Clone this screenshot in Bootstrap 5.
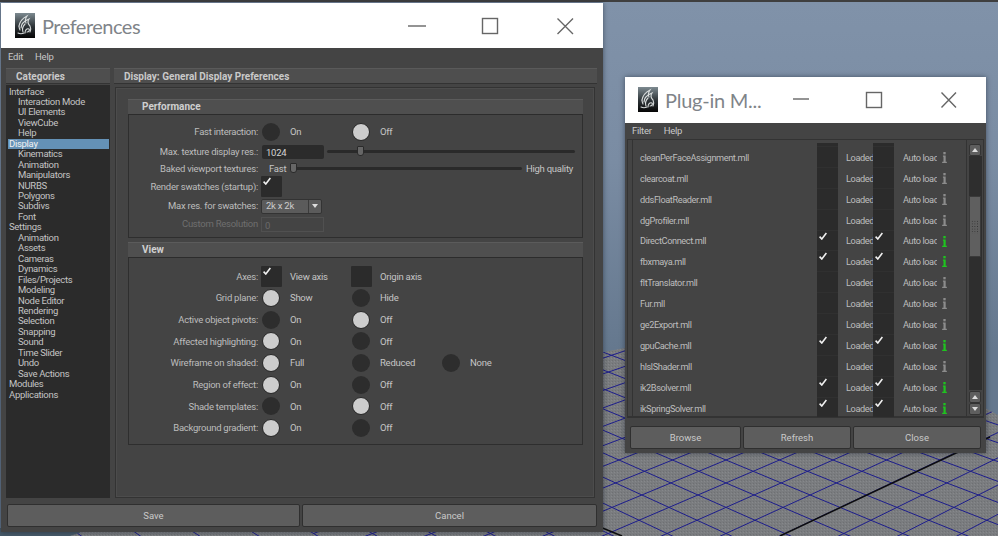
<!DOCTYPE html>
<html lang="en">
<head>
<meta charset="UTF-8">
<meta name="viewport" content="width=device-width, initial-scale=1.0">
<link href="https://cdn.jsdelivr.net/npm/bootstrap@5.3.0/dist/css/bootstrap.min.css" rel="stylesheet">
<title>Preferences</title>
<style>
    html, body { height: 100%; }
    body { width: 998px; height: 536px; overflow: hidden; background: #3c3c3c; font-family: Roboto, "Liberation Sans", sans-serif; font-size: 9.5px; letter-spacing: -.25px; color: #c4c4c4; line-height: 1; }
    .desk { position: absolute; inset: 0; background: linear-gradient(180deg, #8092a9 0%, #7a8ca3 30%, #65788e 65%); border-top: 2px solid #3f3f3f; }
    .desk svg { position: absolute; left: 0; top: -2px; }

    .app-win { position: absolute; background: #444; box-shadow: 0 0 5px rgba(20, 30, 40, .55); }
    .win-pref { left: 1px; top: 3px; width: 602px; height: 529px; }
    .win-plug { left: 625px; top: 77px; width: 361px; height: 376px; }
    .win-title { height: 45px; background: #fff; flex: none; }
    .win-plug .win-title { height: 45.5px; }
    .win-name { font-family: Lato, "Open Sans", sans-serif; font-size: 20px; letter-spacing: -.5px; color: #7f8489; }
    .win-plug .win-name { letter-spacing: -.25px; }
    .win-icons { flex: none; }
    .win-menu { height: 18px; flex: none; color: #c8c8c8; }
    .win-plug .win-menu { height: 16.5px; }

    .pane-head { height: 16px; background: #4e4e4e; border-top: 1px solid #5a5a5a; border-bottom: 1px solid #333; font-size: 10px; letter-spacing: 0; font-weight: 700; color: #c9c9c9; flex: none; padding-top: 1px; }
    .cat-col { width: 104px; flex: none; }
    .cat-list { flex: 1; margin-top: 1px; background: #2b2b2b; padding: 1.5px 1px 0 2px; border: 0; border-radius: 0; letter-spacing: -.3px; }
    .cat-item { height: 10.46px; line-height: 10.46px; padding: 0 0 0 1px; background: none; border: 0; color: #c4c4c4; border-radius: 0 !important; white-space: nowrap; }
    .cat-sub { padding-left: 10px; }
    .cat-on { background: #6491b6; color: #f2f2f2; }
    .main-col { width: 483px; flex: none; }
    .main-frame { flex: 1; margin: 3px 2px 0 1px; border: 1px solid #333; box-shadow: inset 0 0 0 1px #4c4c4c; padding: 11px 11px 0 12px; }

    .sec-head { height: 16px; background: #4f4f4f; border-top: 1px solid #5b5b5b; border-bottom: 1px solid #2c2c2c; font-size: 10px; letter-spacing: 0; font-weight: 700; padding-left: 14px; color: #cfcfcf; }
    .sec-body { border: 1px solid #2e2e2e; border-top: 0; }
    .sec-perf { height: 123px; padding-top: 7px; margin-bottom: 4px; }
    .sec-view { height: 187px; padding-top: 7.5px; }
    .opt-row { display: grid; grid-template-columns: 129px 90px 90px 90px; column-gap: 0; align-items: center; }
    .sec-view .opt-row { height: 21.7px; }
    .h-15 { height: 15px; }
    .h-16 { height: 16px; }
    .h-19 { height: 19px; }
    .h-20 { height: 20px; }
    .opt-label { text-align: right; color: #bdbdbd; white-space: nowrap; }
    .opt-dim { color: #6f6f6f; }
    .opt-cell { margin-left: 4px; display: flex; align-items: center; white-space: nowrap; }
    .opt-wide { grid-column: 2 / 5; width: 313px; }
    .mark-box { width: 28px; flex: none; }
    .dot-off, .dot-on { display: block; width: 18px; height: 18px; border-radius: 50%; background: #2d2d2d; }
    .dot-on { background: #cdcdcd; border: 1px solid #262626; }
    .chk-box { display: block; position: relative; width: 21px; height: 21px; margin-left: -1px; background: #2b2b2b; border-radius: 1px; }
    .chk-box svg, .plug-chk svg { position: absolute; left: 2px; top: 1px; }

    .num-field { display: block; width: 62px; height: 14px; background: #2b2b2b; border-radius: 2px; padding: 3px 0 0 4px; color: #d4d4d4; flex: none; }
    .slider-rail { position: relative; height: 3px; background: #2a2a2a; border-radius: 2px; flex: 1; }
    .slider-knob { position: absolute; top: -4px; width: 7px; height: 10px; background: #666; border: 1px solid #2a2a2a; border-radius: 1px 1px 3px 3px; }
    .combo-box { width: 61px; height: 15px; margin-left: -1px; background: #5b5b5b; border: 1px solid #333; border-radius: 2px; color: #ccc; }
    .combo-arrow { width: 13px; border-left: 1px solid #3b3b3b; }
    .combo-arrow i { display: block; border: 3px solid transparent; border-top: 4px solid #ddd; border-bottom: 0; }
    .off-field { width: 63px; height: 15px; margin-left: -1px; border: 1px solid #505050; padding: 3px 0 0 3px; color: #6a6a6a; }

    .act-btn { height: 23px; padding: 1px 0 0; background: #5d5d5d; border: 1px solid #2f2f2f; border-radius: 2px; color: #c9c9c9; font-size: 9.5px; line-height: 1; }
    .act-btn:hover { background: #666; color: #ddd; border-color: #2f2f2f; }
    .win-plug .act-btn { padding: 0; }

    .plug-frame { height: 279px; margin: 0 2px; border: 1px solid #333; border-bottom-width: 2px; flex: none; }
    .plug-strip { width: 5px; border-right: 1px solid #333; flex: none; }
    .plug-rows { width: 333px; height: 274px; margin-top: 3px; overflow: hidden; flex: none; letter-spacing: -.4px; font-size: 9.2px; }
    .plug-row { height: 20.9px; display: flex; align-items: center; color: #bdbdbd; }
    .plug-row:first-child { margin-top: -16.9px; }
    .plug-name { width: 184px; padding-left: 7px; flex: none; white-space: nowrap; }
    .plug-chk { position: relative; width: 21px; height: 100%; background: #2b2b2b; border-bottom: 1px solid #303030; flex: none; }
    .plug-chk svg { left: 2px; top: 1px; }
    .plug-txt { overflow: hidden; white-space: nowrap; flex: none; }
    .txt-a { width: 35px; padding-left: 8px; }
    .txt-b { width: 43px; padding-left: 9px; }
    .plug-info { margin-left: 5px; }
    .plug-bar { width: 18px; border-left: 1px solid #333; padding: 4px 2px 1px 2px; flex: none; }
    .bar-btn { width: 12px; height: 12px; background: #5e5e5e; border: 1px solid #333; border-radius: 2px; flex: none; }
    .bar-btn i { display: block; border: 3px solid transparent; }
    .bar-up i { border-bottom: 4px solid #ddd; border-top: 0; }
    .bar-down i { border-top: 4px solid #ddd; border-bottom: 0; }
    .bar-track { height: 236px; margin: 0 0 1px; background: #2e2e2e; padding-top: 40px; }
    .bar-thumb { width: 12px; height: 61px; background: #5f5f5f; border: 1px solid #3a3a3a; }
    .bar-grip { width: 8px; height: 14px; background-image: radial-gradient(#333 .7px, transparent .8px); background-size: 2.6px 2.6px; }
</style>
</head>
<body>

<div class="desk">
    <svg width="998" height="536" xmlns="http://www.w3.org/2000/svg">
        <defs>
            <pattern id="dither" width="3" height="3" patternUnits="userSpaceOnUse">
                <rect width="3" height="3" fill="#7a7c7f"/>
                <rect width="1" height="1" fill="#6e7073"/>
                <rect x="2" y="1" width="1" height="1" fill="#86888b"/>
            </pattern>
            <clipPath id="floorClip"><polygon points="70,536 604,352 640,345 985,408 998,415 998,536"/></clipPath>
        </defs>
        <rect x="0" y="528" width="80" height="8" fill="#475a69"/>
        <polygon points="70,536 604,352 640,345 985,408 998,415 998,536" fill="url(#dither)"/>
        <g id="floorLines" clip-path="url(#floorClip)" stroke="#1d1d8c" stroke-width="1" fill="none"></g>
        <g clip-path="url(#floorClip)" stroke="#0d0d0d" stroke-width="1.5">
            <line x1="780" y1="536" x2="990" y2="437"/>
            <line x1="600" y1="527" x2="622" y2="536"/>
        </g>
    </svg>
</div>

<svg width="0" height="0" class="position-absolute">
    <defs>
        <linearGradient id="logoBg" x1="0" y1="0" x2="0" y2="1">
            <stop offset="0" stop-color="#7d8a90"/>
            <stop offset=".55" stop-color="#2c3236"/>
            <stop offset="1" stop-color="#050505"/>
        </linearGradient>
        <symbol id="mayaLogo" viewBox="0 0 20 25">
            <rect width="20" height="25" fill="url(#logoBg)"/>
            <g fill="none" stroke="#d8dcdc" stroke-width="1.1" stroke-linecap="round">
                <path d="M4 13C5 8 8 5 12 3C10 6 10 8 11 10"/>
                <path d="M6 15C6 11 9 8 14 6C12 9 13 11 15 13C16 15 16 17 15 19"/>
                <path d="M5 17C4 15 4 14 4 13M8 19C7 16 8 13 10 11"/>
                <path d="M10 20C10 17 12 15 14 16C15 17 14 19 12 19"/>
                <path d="M3 20C5 21 7 21 9 20"/>
            </g>
        </symbol>
        <symbol id="tick" viewBox="0 0 8 8">
            <path d="M.6 4.6L2.8 7L7.4 1" fill="none" stroke="#f0f0f0" stroke-width="1.6"/>
        </symbol>
        <symbol id="infoMark" viewBox="0 0 6 14">
            <rect x="1.5" y="0" width="3" height="3"/>
            <path d="M1 4.5H4.5V12.5H6V14H0V12.5H1.7V6H1Z"/>
        </symbol>
    </defs>
</svg>

<!-- preferences window -->
<div class="app-win win-pref d-flex flex-column">
    <div class="win-title d-flex align-items-center position-relative">
        <svg width="20" height="25" style="margin-left:14px"><use href="#mayaLogo"/></svg>
        <span class="win-name" style="margin-left:7px">Preferences</span>
        <svg class="win-icons position-absolute top-0" style="left:400px" width="180" height="45" fill="none" stroke="#666" stroke-width="1.4">
            <line x1="7" y1="23" x2="25" y2="23"/>
            <rect x="81.5" y="15.5" width="15" height="15"/>
            <path d="M156.5 15.5L172 31M172 15.5L156.5 31"/>
        </svg>
    </div>
    <div class="win-menu d-flex align-items-center ps-2" style="gap:12px">
        <span style="margin-left:-1px">Edit</span><span>Help</span>
    </div>
    <div class="d-flex flex-grow-1 gap-1" style="padding:2px 6px 0 5px">
        <div class="cat-col d-flex flex-column">
            <div class="pane-head d-flex align-items-center" style="padding-left:10px">Categories</div>
            <div class="cat-list list-group">
                <div class="cat-item list-group-item">Interface</div>
                <div class="cat-item cat-sub list-group-item">Interaction Mode</div>
                <div class="cat-item cat-sub list-group-item">UI Elements</div>
                <div class="cat-item cat-sub list-group-item">ViewCube</div>
                <div class="cat-item cat-sub list-group-item">Help</div>
                <div class="cat-item cat-on list-group-item">Display</div>
                <div class="cat-item cat-sub list-group-item">Kinematics</div>
                <div class="cat-item cat-sub list-group-item">Animation</div>
                <div class="cat-item cat-sub list-group-item">Manipulators</div>
                <div class="cat-item cat-sub list-group-item">NURBS</div>
                <div class="cat-item cat-sub list-group-item">Polygons</div>
                <div class="cat-item cat-sub list-group-item">Subdivs</div>
                <div class="cat-item cat-sub list-group-item">Font</div>
                <div class="cat-item list-group-item">Settings</div>
                <div class="cat-item cat-sub list-group-item">Animation</div>
                <div class="cat-item cat-sub list-group-item">Assets</div>
                <div class="cat-item cat-sub list-group-item">Cameras</div>
                <div class="cat-item cat-sub list-group-item">Dynamics</div>
                <div class="cat-item cat-sub list-group-item">Files/Projects</div>
                <div class="cat-item cat-sub list-group-item">Modeling</div>
                <div class="cat-item cat-sub list-group-item">Node Editor</div>
                <div class="cat-item cat-sub list-group-item">Rendering</div>
                <div class="cat-item cat-sub list-group-item">Selection</div>
                <div class="cat-item cat-sub list-group-item">Snapping</div>
                <div class="cat-item cat-sub list-group-item">Sound</div>
                <div class="cat-item cat-sub list-group-item">Time Slider</div>
                <div class="cat-item cat-sub list-group-item">Undo</div>
                <div class="cat-item cat-sub list-group-item">Save Actions</div>
                <div class="cat-item list-group-item">Modules</div>
                <div class="cat-item list-group-item">Applications</div>
            </div>
        </div>
        <div class="main-col d-flex flex-column">
            <div class="pane-head d-flex align-items-center" style="padding-left:10px">Display: General Display Preferences</div>
            <div class="main-frame">
                <div class="sec-head d-flex align-items-center">Performance</div>
                <div class="sec-body sec-perf">
                    <div class="opt-row h-20">
                        <span class="opt-label">Fast interaction:</span>
                        <span class="opt-cell"><span class="mark-box"><i class="dot-off"></i></span>On</span>
                        <span class="opt-cell"><span class="mark-box"><i class="dot-on"></i></span>Off</span>
                    </div>
                    <div class="opt-row h-19">
                        <span class="opt-label">Max. texture display res.:</span>
                        <span class="opt-cell opt-wide" style="gap:3px">
                            <span class="num-field">1024</span>
                            <span class="slider-rail"><i class="slider-knob" style="left:30px"></i></span>
                        </span>
                    </div>
                    <div class="opt-row h-15">
                        <span class="opt-label">Baked viewport textures:</span>
                        <span class="opt-cell opt-wide" style="padding:0 2px 0 7px">
                            <span>Fast</span>
                            <span class="slider-rail mx-1"><i class="slider-knob" style="left:0"></i></span>
                            <span>High quality</span>
                        </span>
                    </div>
                    <div class="opt-row h-20">
                        <span class="opt-label">Render swatches (startup):</span>
                        <span class="opt-cell"><span class="chk-box"><svg width="8" height="8"><use href="#tick"/></svg></span></span>
                    </div>
                    <div class="opt-row h-20">
                        <span class="opt-label">Max res. for swatches:</span>
                        <span class="opt-cell">
                            <span class="combo-box d-flex align-items-stretch">
                                <span class="flex-grow-1 d-flex align-items-center ps-1">2k x 2k</span>
                                <span class="combo-arrow d-flex align-items-center justify-content-center"><i></i></span>
                            </span>
                        </span>
                    </div>
                    <div class="opt-row h-16">
                        <span class="opt-label opt-dim">Custom Resolution</span>
                        <span class="opt-cell"><span class="off-field">0</span></span>
                    </div>
                </div>
                <div class="sec-head d-flex align-items-center">View</div>
                <div class="sec-body sec-view">
                    <div class="opt-row">
                        <span class="opt-label">Axes:</span>
                        <span class="opt-cell"><span class="mark-box"><span class="chk-box"><svg width="8" height="8"><use href="#tick"/></svg></span></span>View axis</span>
                        <span class="opt-cell"><span class="mark-box"><span class="chk-box"></span></span>Origin axis</span>
                    </div>
                    <div class="opt-row">
                        <span class="opt-label">Grid plane:</span>
                        <span class="opt-cell"><span class="mark-box"><i class="dot-on"></i></span>Show</span>
                        <span class="opt-cell"><span class="mark-box"><i class="dot-off"></i></span>Hide</span>
                    </div>
                    <div class="opt-row">
                        <span class="opt-label">Active object pivots:</span>
                        <span class="opt-cell"><span class="mark-box"><i class="dot-off"></i></span>On</span>
                        <span class="opt-cell"><span class="mark-box"><i class="dot-on"></i></span>Off</span>
                    </div>
                    <div class="opt-row">
                        <span class="opt-label">Affected highlighting:</span>
                        <span class="opt-cell"><span class="mark-box"><i class="dot-on"></i></span>On</span>
                        <span class="opt-cell"><span class="mark-box"><i class="dot-off"></i></span>Off</span>
                    </div>
                    <div class="opt-row">
                        <span class="opt-label">Wireframe on shaded:</span>
                        <span class="opt-cell"><span class="mark-box"><i class="dot-on"></i></span>Full</span>
                        <span class="opt-cell"><span class="mark-box"><i class="dot-off"></i></span>Reduced</span>
                        <span class="opt-cell"><span class="mark-box"><i class="dot-off"></i></span>None</span>
                    </div>
                    <div class="opt-row">
                        <span class="opt-label">Region of effect:</span>
                        <span class="opt-cell"><span class="mark-box"><i class="dot-on"></i></span>On</span>
                        <span class="opt-cell"><span class="mark-box"><i class="dot-off"></i></span>Off</span>
                    </div>
                    <div class="opt-row">
                        <span class="opt-label">Shade templates:</span>
                        <span class="opt-cell"><span class="mark-box"><i class="dot-off"></i></span>On</span>
                        <span class="opt-cell"><span class="mark-box"><i class="dot-on"></i></span>Off</span>
                    </div>
                    <div class="opt-row">
                        <span class="opt-label">Background gradient:</span>
                        <span class="opt-cell"><span class="mark-box"><i class="dot-on"></i></span>On</span>
                        <span class="opt-cell"><span class="mark-box"><i class="dot-off"></i></span>Off</span>
                    </div>
                </div>
            </div>
        </div>
    </div>
    <div class="d-flex" style="gap:2px;padding:6px 6px 5px 6px">
        <button class="btn act-btn" style="width:293px">Save</button>
        <button class="btn act-btn" style="width:295px">Cancel</button>
    </div>
</div>

<!-- plug-in manager window -->
<div class="app-win win-plug d-flex flex-column">
    <div class="win-title d-flex align-items-center position-relative">
        <svg width="20" height="25" style="margin-left:13px"><use href="#mayaLogo"/></svg>
        <span class="win-name" style="margin-left:7px">Plug-in M...</span>
        <svg class="win-icons position-absolute top-0" style="left:160px" width="180" height="45" fill="none" stroke="#666" stroke-width="1.4">
            <line x1="8" y1="22" x2="24" y2="22"/>
            <rect x="81.5" y="15.5" width="15" height="15"/>
            <path d="M156.5 15.5L171 30.5M171 15.5L156.5 30.5"/>
        </svg>
    </div>
    <div class="win-menu d-flex align-items-center ps-2" style="gap:12px">
        <span style="margin-left:-1px">Filter</span><span>Help</span>
    </div>
    <div class="plug-frame d-flex">
        <div class="plug-strip"></div>
        <div class="plug-rows" id="plugRows"></div>
        <div class="plug-bar d-flex flex-column">
            <div class="bar-btn bar-up d-flex align-items-center justify-content-center"><i></i></div>
            <div class="bar-track">
                <div class="bar-thumb d-flex align-items-center justify-content-center"><div class="bar-grip"></div></div>
            </div>
            <div class="bar-btn bar-up d-flex align-items-center justify-content-center"><i></i></div>
            <div class="bar-btn bar-down d-flex align-items-center justify-content-center mt-auto"><i></i></div>
        </div>
    </div>
    <div class="d-flex" style="gap:2px;padding:8px 5px 0 5px">
        <button class="btn act-btn" style="width:111px">Browse</button>
        <button class="btn act-btn" style="width:108px">Refresh</button>
        <button class="btn act-btn" style="width:128px">Close</button>
    </div>
</div>

<script>
// plug-in list rows, name and whether it is loaded
const plugins = [
    ["", false],
    ["cleanPerFaceAssignment.mll", false],
    ["clearcoat.mll", false],
    ["ddsFloatReader.mll", false],
    ["dgProfiler.mll", false],
    ["DirectConnect.mll", true],
    ["fbxmaya.mll", true],
    ["fltTranslator.mll", false],
    ["Fur.mll", false],
    ["ge2Export.mll", false],
    ["gpuCache.mll", true],
    ["hlslShader.mll", false],
    ["ik2Bsolver.mll", true],
    ["ikSpringSolver.mll", true]
];

const tick = '<svg width="8" height="8"><use href="#tick"/></svg>';
document.getElementById("plugRows").innerHTML = plugins.map(([name, on]) => {
    const mark = on ? tick : "";
    const info = name ? `<svg class="plug-info" width="5" height="11" fill="${on ? "#1fc41f" : "#8c8c8c"}"><use href="#infoMark"/></svg>` : "";
    return `<div class="plug-row">
        <span class="plug-name">${name}</span>
        <span class="plug-chk">${mark}</span>
        <span class="plug-txt txt-a">${name ? "Loaded" : ""}</span>
        <span class="plug-chk">${mark}</span>
        <span class="plug-txt txt-b">${name ? "Auto load" : ""}</span>
        ${info}
    </div>`;
}).join("");

// floor grid: straight lines of a perspective plane, fitted to the crossings in the viewport
const c = 1 / 726, e = 0.0000211;
const pt = (i, j) => {
    const d = c - e * (i + j);
    return [726 + (i - j) * 0.03685 / d, 1 / d - 266];
};
let lines = "";
for (let n = -30; n <= 30; n++) {
    const a = pt(n, -14), b = pt(n, 10), p = pt(-14, n), q = pt(10, n);
    lines += `<line x1="${a[0]}" y1="${a[1]}" x2="${b[0]}" y2="${b[1]}"/>`;
    lines += `<line x1="${p[0]}" y1="${p[1]}" x2="${q[0]}" y2="${q[1]}"/>`;
}
document.getElementById("floorLines").innerHTML = lines;
</script>

<script src="https://cdn.jsdelivr.net/npm/bootstrap@5.3.0/dist/js/bootstrap.bundle.min.js"></script>
</body>
</html>
